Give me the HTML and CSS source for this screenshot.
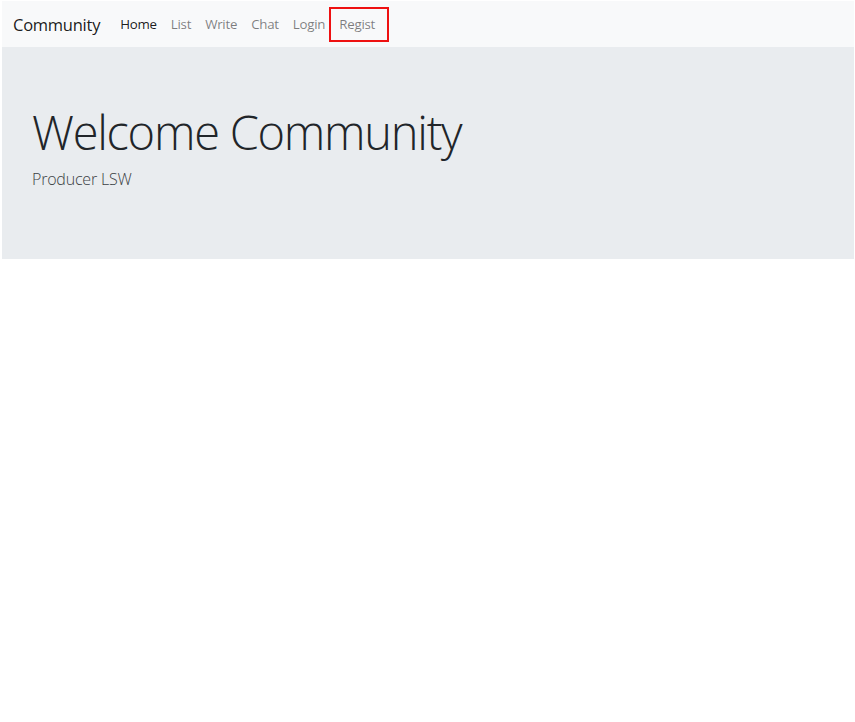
FILE: index.html
```html
<!DOCTYPE html>
<html lang="en">
<head>
<meta charset="utf-8">
<title>Community</title>
<link rel="stylesheet" href="styles.css">
</head>
<body>
<div class="page">
  <nav class="navbar">
    <a class="brand" href="#">Community</a>
    <ul class="nav">
      <li><a class="nav-link active" href="#">Home</a></li>
      <li><a class="nav-link" href="#">List</a></li>
      <li><a class="nav-link" href="#">Write</a></li>
      <li><a class="nav-link" href="#">Chat</a></li>
      <li><a class="nav-link" href="#">Login</a></li>
      <li><a class="nav-link highlight" href="#">Regist</a></li>
    </ul>
  </nav>
  <header class="jumbotron">
    <h1 class="display">Welcome Community</h1>
    <p class="lead">Producer LSW</p>
  </header>
</div>
</body>
</html>
```
FILE: styles.css
```css
* { box-sizing: border-box; }
html, body { margin: 0; padding: 0; background: #fff; }
body {
  font-family: "Open Sans", "Noto Sans", sans-serif;
  color: #212529;
}
.page {
  padding: 1px 1px 0 2px;
}
.navbar {
  display: flex;
  align-items: center;
  height: 46px;
  padding: 0 11px;
  background: #f8f9fa;
}
.brand {
  font-size: 16.5px;
  color: rgba(0,0,0,.9);
  text-decoration: none;
  margin-right: 13px;
  letter-spacing: -0.25px;
}
.nav {
  display: flex;
  align-items: center;
  list-style: none;
  margin: 0;
  padding: 0;
}
.nav-link {
  display: block;
  font-size: 13.3px;
  line-height: 20px;
  padding: 0 7px;
  color: rgba(0,0,0,.5);
  text-decoration: none;
  letter-spacing: -0.25px;
}
.nav-link.active { color: rgba(0,0,0,.9); }
.nav-link.highlight {
  border: 2px solid #ee1111;
  height: 35px;
  line-height: 31px;
  padding: 0 12px 0 8px;
  margin-left: -3px;
}
.jumbotron {
  height: 212px;
  background: #e9ecef;
  padding: 57px 30px 0;
}
.display {
  margin: 0;
  font-size: 47px;
  font-weight: 300;
  line-height: 1.2;
  letter-spacing: -1.27px;
}
.lead {
  margin: 8px 0 0;
  font-size: 16px;
  font-weight: 300;
  color: #3b3f44;
  letter-spacing: -0.2px;
}
```
